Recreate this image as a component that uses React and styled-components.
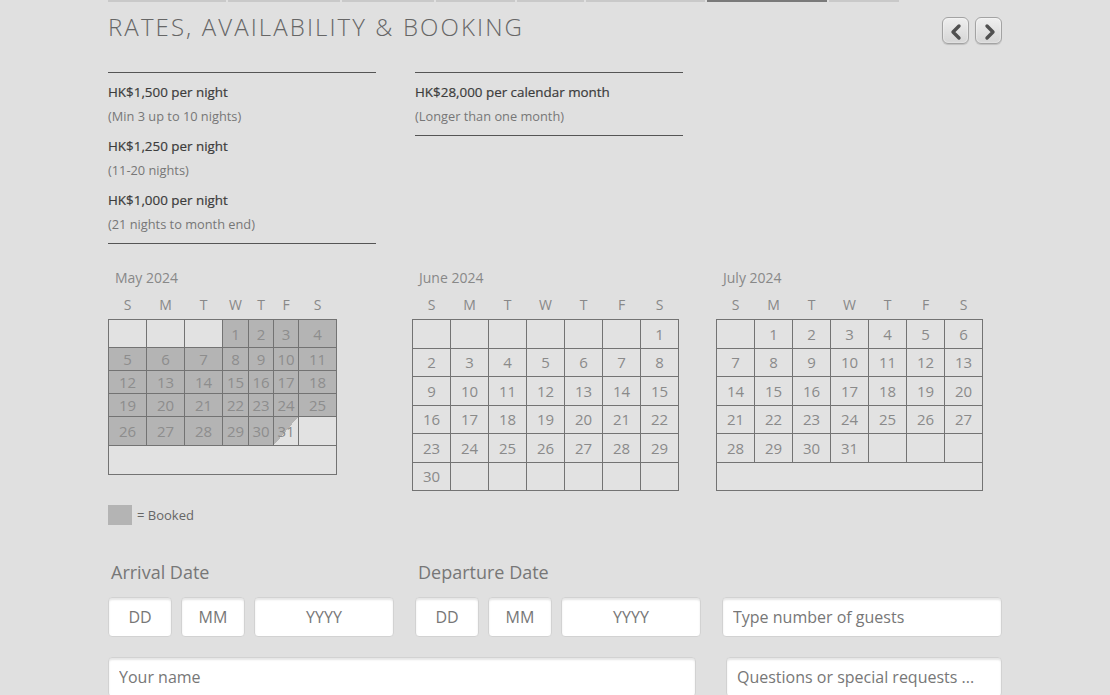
import React from 'react'
import styled, {createGlobalStyle} from 'styled-components'

const GlobalStyle = createGlobalStyle`
  body {
    margin: 0;
    background: #e0e0e0;
    font-family: "Open Sans", "Noto Sans", sans-serif;
    color: #555;
  }
`;

const Page = styled.div`
  padding-left: 108px;
  width: 894px;
  height: 695px;
  overflow: hidden;
`;

const TabStrip = styled.div`
  display: flex;
  gap: 2px;
  height: 2px;
`;

const TabEdge = styled.div`
  height: 2px;
  width: ${p => p.w}px;
  background: ${p => (p.active ? '#7a7a7a' : '#c9c9c9')};
`;

const Header = styled.div`
  display: flex;
  justify-content: space-between;
  align-items: flex-start;
`;

const Title = styled.h1`
  margin: 10px 0 0;
  font-size: 24px;
  line-height: 30px;
  font-weight: 300;
  letter-spacing: 2.1px;
  color: #666;
`;

const NavButtons = styled.div`
  display: flex;
  gap: 6px;
  margin-top: 15px;
`;

const NavButton = styled.button`
  width: 27px;
  height: 27px;
  padding: 0;
  display: grid;
  place-items: center;
  border: 1px solid #a3a3a3;
  border-radius: 6px;
  background: linear-gradient(#efefef, #d5d5d5);
  box-shadow: inset 0 0 2px #fff, 0 1px 1px rgba(0, 0, 0, 0.15);
  cursor: pointer;
`;

const Rates = styled.div`
  display: grid;
  grid-template-columns: 268px 268px;
  column-gap: 39px;
  align-items: start;
  margin-top: 28px;
`;

const RateColumn = styled.div`
  border-top: 1px solid #555;
  border-bottom: 1px solid #555;
  padding: 7px 0 7px;
`;

const RateItem = styled.div`
  & + & {
    margin-top: 6px;
  }
`;

const Price = styled.div`
  font-size: 13.4px;
  line-height: 24px;
  font-weight: 500;
  color: #3c3c3c;
  -webkit-text-stroke: 0.2px #3c3c3c;
`;

const Note = styled.div`
  font-size: 12.8px;
  line-height: 24px;
  color: #777;
`;

const Calendars = styled.div`
  display: grid;
  grid-template-columns: 304px 304px 290px;
  margin-top: 25px;
  align-items: start;
`;

const Month = styled.div`
  margin-left: 7px;
  font-size: 14px;
  line-height: 18px;
  color: #888;
`;

const WeekRow = styled.div`
  display: grid;
  grid-template-columns: ${p => p.cols};
  column-gap: 1px;
  padding: 0 1px;
  margin-top: 10px;
  font-size: 14px;
  line-height: 16px;
  color: #888;
  text-align: center;
`;

const Grid = styled.div`
  display: grid;
  grid-template-columns: ${p => p.cols};
  grid-template-rows: ${p => p.rows};
  gap: 1px;
  padding: 1px;
  margin-top: 6px;
  width: max-content;
  background: #737373;
`;

const Day = styled.div`
  display: grid;
  place-items: center;
  font-size: 15px;
  color: ${p => (p.booked ? '#8d8d8d' : '#8a8a8a')};
  background: ${p =>
    p.partial
      ? 'linear-gradient(to bottom right, #b4b4b4 50%, #e2e2e2 50%)'
      : p.booked
      ? '#b4b4b4'
      : '#e2e2e2'};
  grid-column: ${p => (p.span ? '1 / -1' : 'auto')};
`;

const Legend = styled.div`
  display: flex;
  align-items: center;
  gap: 5px;
  margin-top: 14px;
  font-size: 13px;
  color: #666;
`;

const Swatch = styled.span`
  width: 24px;
  height: 20px;
  background: #b4b4b4;
`;

const FormRow = styled.div`
  display: grid;
  grid-template-columns: ${p => p.cols};
  column-gap: ${p => p.gap}px;
  align-items: end;
  margin-top: ${p => p.top}px;
`;

const DateGroup = styled.div`
  display: flex;
  flex-direction: column;
`;

const Label = styled.div`
  margin-left: 3px;
  font-size: 18px;
  line-height: 22px;
  color: #777;
  margin-bottom: 14px;
`;

const DateFields = styled.div`
  display: grid;
  grid-template-columns: 64px 64px 140px;
  column-gap: 9px;
`;

const Input = styled.input`
  box-sizing: border-box;
  width: 100%;
  height: 40px;
  border: 1px solid #d2d2d2;
  border-radius: 4px;
  background: #fff;
  box-shadow: inset 0 2px 2px rgba(0, 0, 0, 0.1);
  font-family: inherit;
  font-size: 16px;
  color: #555;
  padding: 0 ${p => (p.center ? 0 : 10)}px;
  text-align: ${p => (p.center ? 'center' : 'left')};
  outline: none;
  &::placeholder {
    color: #777;
  }
`;

const tabs = [
  {w: 118}, {w: 112}, {w: 92}, {w: 79}, {w: 67}, {w: 119}, {w: 120, active: true}, {w: 70},
];

const Chevron = ({left}) => (
  <svg width="27" height="27" viewBox="0 0 27 27">
    <polyline
      points={left ? '16,8 10,14 16,20' : '11,8 17,14 11,20'}
      fill="none"
      stroke="#505050"
      strokeWidth="3.4"
      strokeLinecap="round"
      strokeLinejoin="round"
    />
  </svg>
);

const calendars = [
  {
    name: 'May 2024',
    start: 3,
    days: 31,
    booked: d => d <= 30,
    partial: d => d === 31,
    cols: '37px 37px 37px 25px 24px 24px 37px',
    rows: '27px 22px 22px 22px 28px 28px',
  },
  {
    name: 'June 2024',
    start: 6,
    days: 30,
    booked: () => false,
    partial: () => false,
    cols: 'repeat(7, 37px)',
    rows: 'repeat(6, 27.5px)',
  },
  {
    name: 'July 2024',
    start: 1,
    days: 31,
    booked: () => false,
    partial: () => false,
    cols: 'repeat(7, 37px)',
    rows: 'repeat(6, 27.5px)',
  },
];

const Calendar = ({cal}) => {
  const cells = [];
  for (let i = 0; i < cal.start; i++) cells.push(<Day key={'b' + i} />);
  for (let d = 1; d <= cal.days; d++) {
    cells.push(
      <Day key={d} booked={cal.booked(d)} partial={cal.partial(d)}>
        {d}
      </Day>
    );
  }
  const used = cal.start + cal.days;
  const weeks = Math.ceil(used / 7);
  for (let i = used; i < weeks * 7; i++) cells.push(<Day key={'a' + i} />);
  for (let w = weeks; w < 6; w++) cells.push(<Day key={'r' + w} span />);

  return (
    <div>
      <Month>{cal.name}</Month>
      <WeekRow cols={cal.cols}>
        {['S', 'M', 'T', 'W', 'T', 'F', 'S'].map((l, i) => (
          <span key={i}>{l}</span>
        ))}
      </WeekRow>
      <Grid cols={cal.cols} rows={cal.rows}>
        {cells}
      </Grid>
    </div>
  );
};

const DateInputs = ({label}) => (
  <DateGroup>
    <Label>{label}</Label>
    <DateFields>
      <Input center placeholder="DD" />
      <Input center placeholder="MM" />
      <Input center placeholder="YYYY" />
    </DateFields>
  </DateGroup>
);

export default function App() {
  return (
    <Page>
      <GlobalStyle />
      <TabStrip>
        {tabs.map((t, i) => (
          <TabEdge key={i} w={t.w} active={t.active} />
        ))}
      </TabStrip>
      <Header>
        <Title>RATES, AVAILABILITY &amp; BOOKING</Title>
        <NavButtons>
          <NavButton aria-label="Previous"><Chevron left /></NavButton>
          <NavButton aria-label="Next"><Chevron /></NavButton>
        </NavButtons>
      </Header>

      <Rates>
        <RateColumn>
          <RateItem>
            <Price>HK$1,500 per night</Price>
            <Note>(Min 3 up to 10 nights)</Note>
          </RateItem>
          <RateItem>
            <Price>HK$1,250 per night</Price>
            <Note>(11-20 nights)</Note>
          </RateItem>
          <RateItem>
            <Price>HK$1,000 per night</Price>
            <Note>(21 nights to month end)</Note>
          </RateItem>
        </RateColumn>
        <RateColumn>
          <RateItem>
            <Price>HK$28,000 per calendar month</Price>
            <Note>(Longer than one month)</Note>
          </RateItem>
        </RateColumn>
      </Rates>

      <Calendars>
        {calendars.map(c => (
          <Calendar key={c.name} cal={c} />
        ))}
      </Calendars>

      <Legend>
        <Swatch />= Booked
      </Legend>

      <FormRow cols="286px 286px 280px" gap={21} top={36}>
        <DateInputs label="Arrival Date" />
        <DateInputs label="Departure Date" />
        <Input placeholder="Type number of guests" />
      </FormRow>

      <FormRow cols="588px 276px" gap={30} top={20}>
        <Input placeholder="Your name" />
        <Input placeholder="Questions or special requests ..." />
      </FormRow>
    </Page>
  );
}
